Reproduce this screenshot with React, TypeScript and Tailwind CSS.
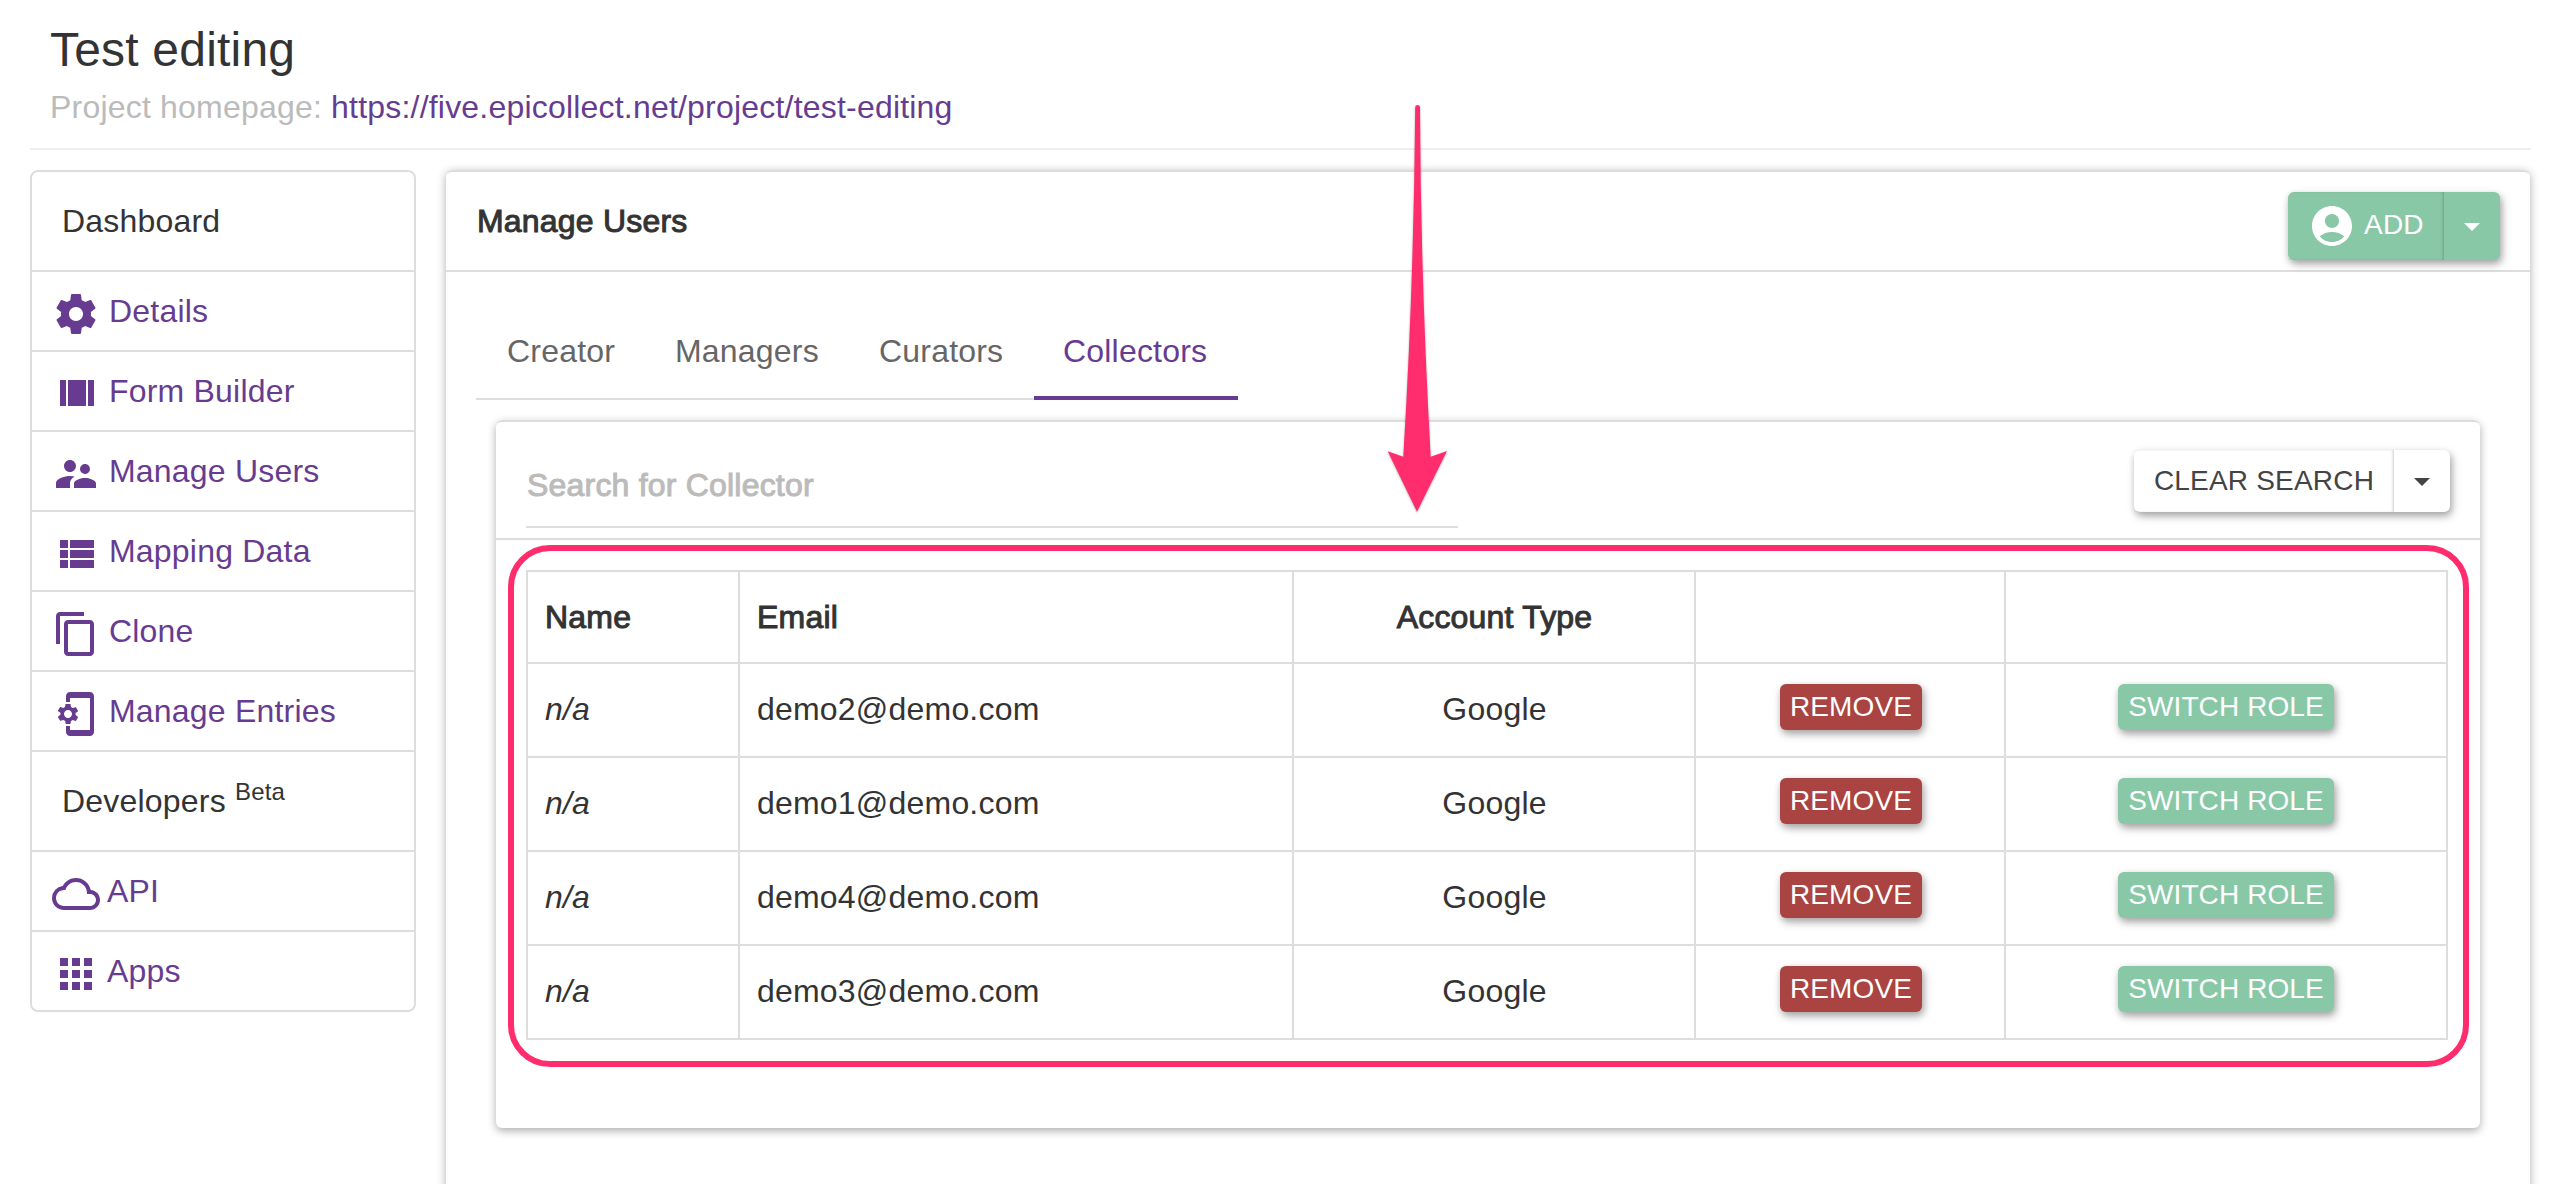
import type { ReactNode } from "react";
import { MdAccountCircle, MdApps, MdCloudQueue, MdContentCopy, MdSupervisorAccount } from "react-icons/md";

const raised = "shadow-[2px_4px_10px_rgba(0,0,0,0.26),1px_3px_6px_rgba(0,0,0,0.16)]";
const iconSize = "mt-[18px] size-12";

const paths = {
  settings:
    "M19.43 12.98c.04-.32.07-.64.07-.98s-.03-.66-.07-.98l2.11-1.65c.19-.15.24-.42.12-.64l-2-3.46c-.12-.22-.39-.3-.61-.22l-2.49 1c-.52-.4-1.08-.73-1.69-.98l-.38-2.65C14.46 2.18 14.25 2 14 2h-4c-.25 0-.46.18-.49.42l-.38 2.65c-.61.25-1.17.59-1.69.98l-2.49-1c-.23-.09-.49 0-.61.22l-2 3.46c-.13.22-.07.49.12.64l2.11 1.65c-.04.32-.07.65-.07.98s.03.66.07.98l-2.11 1.65c-.19.15-.24.42-.12.64l2 3.46c.12.22.39.3.61.22l2.49-1c.52.4 1.08.73 1.69.98l.38 2.65c.03.24.24.42.49.42h4c.25 0 .46-.18.49-.42l.38-2.65c.61-.25 1.17-.59 1.69-.98l2.49 1c.23.09.49 0 .61-.22l2-3.46c.12-.22.07-.49-.12-.64l-2.11-1.65zM12 15.5c-1.93 0-3.5-1.57-3.5-3.5s1.57-3.5 3.5-3.5 3.5 1.57 3.5 3.5-1.57 3.5-3.5 3.5z",
  columns: "M4 18h3V5H4v13zM18 5v13h3V5h-3zM8 18h9V5H8v13z",
  list: "M4 14h4v-4H4v4zm0 5h4v-4H4v4zM4 9h4V5H4v4zm5 5h12v-4H9v4zm0 5h12v-4H9v4zM9 5v4h12V5H9z",
  phoneSetup:
    "M11.8 12.5v-1l1.1-.8c.1-.1.1-.2.1-.3l-1-1.7c-.1-.1-.2-.2-.3-.1l-1.3.4c-.3-.2-.6-.4-.9-.5l-.2-1.3c0-.1-.1-.2-.3-.2H7c-.1 0-.2.1-.3.2l-.2 1.3c-.3.1-.6.3-.9.5l-1.3-.5c-.1 0-.2 0-.3.1l-1 1.7c-.1.1 0 .2.1.3l1.1.8v1l-1.1.8c-.1.2-.1.3-.1.4l1 1.7c.1.1.2.2.3.1l1.4-.4c.3.2.6.4.9.5l.2 1.3c-.1.1.1.2.2.2h2c.1 0 .2-.1.3-.2l.2-1.3c.3-.1.6-.3.9-.5l1.3.5c.1 0 .2 0 .3-.1l1-1.7c.1-.1 0-.2-.1-.3l-1.1-.9zM8 14c-1.1 0-2-.9-2-2s.9-2 2-2 2 .9 2 2-.9 2-2 2zM19 1H9c-1.1 0-2 .9-2 2v3h2V4h10v16H9v-2H7v3c0 1.1.9 2 2 2h10c1.1 0 2-.9 2-2V3c0-1.1-.9-2-2-2z",
};

function PathIcon({ d }: { d: string }) {
  return (
    <svg viewBox="0 0 24 24" className={iconSize} fill="currentColor">
      <path d={d} />
    </svg>
  );
}

function NavHeading({ children }: { children: ReactNode }) {
  return (
    <div className="flex h-[100px] items-center border-t-2 border-[#ddd] px-[30px] text-[#333] first:h-[98px] first:border-t-0">
      <span>{children}</span>
    </div>
  );
}

function NavItem({ icon, label, tight }: { icon: ReactNode; label: string; tight?: boolean }) {
  return (
    <a className="flex h-20 items-start border-t-2 border-[#ddd] pl-5 text-[#673c90]">
      {icon}
      <span className={`pt-5 leading-[38px] ${tight ? "ml-[7px]" : "ml-[9px]"}`}>{label}</span>
    </a>
  );
}

function Caret() {
  return (
    <svg viewBox="0 0 16 8" className="h-2 w-4" fill="currentColor">
      <path d="M0 0h16L8 8z" />
    </svg>
  );
}

const tabs = [
  { label: "Creator", className: "w-[168px] border-b-2 border-[#ddd] pb-0.5 pl-[31px] text-[#666]" },
  { label: "Managers", className: "w-[204px] border-b-2 border-[#ddd] pb-0.5 pl-[31px] text-[#666]" },
  { label: "Curators", className: "w-[186px] border-b-2 border-[#ddd] pb-0.5 pl-[31px] text-[#666]" },
  { label: "Collectors", className: "w-[204px] border-b-4 border-[#673c90] pl-[29px] text-[#673c90]" },
];

const emails = ["demo2@demo.com", "demo1@demo.com", "demo4@demo.com", "demo3@demo.com"];
const cols = "grid grid-cols-[212px_554px_402px_310px_442px]";
const cell = "border-r-2 border-b-2 border-[#ddd]";
const bold = "[-webkit-text-stroke:1px_currentColor]";
const rowButton = "h-[46px] rounded-md text-[28px] leading-[46px] tracking-[0.1px] text-white";

export default function App() {
  return (
    <div className="relative h-[1184px] w-[2556px] overflow-hidden bg-white font-['Liberation_Sans',Arial,sans-serif] text-[32px] leading-[44px] tracking-[0.2px] text-[#333]">
      <header className="ml-[30px] h-[150px] w-[2501px] border-b-2 border-[#eee] pl-5">
        <h1 className="pt-[23px] text-[48px] leading-[54px]">Test editing</h1>
        <p className="mt-2 text-[#bbb]">
          Project homepage: <a className="text-[#673c90]">https://five.epicollect.net/project/test-editing</a>
        </p>
      </header>

      <div className="mt-5 flex items-start">
        <nav className="ml-[30px] w-[386px] rounded-lg border-2 border-[#ddd]">
          <NavHeading>Dashboard</NavHeading>
          <NavItem icon={<PathIcon d={paths.settings} />} label="Details" />
          <NavItem icon={<PathIcon d={paths.columns} />} label="Form Builder" />
          <NavItem icon={<MdSupervisorAccount className={iconSize} />} label="Manage Users" />
          <NavItem icon={<PathIcon d={paths.list} />} label="Mapping Data" />
          <NavItem icon={<MdContentCopy className={iconSize} />} label="Clone" />
          <NavItem icon={<PathIcon d={paths.phoneSetup} />} label="Manage Entries" />
          <NavHeading>
            Developers <sup className="-top-3 align-baseline text-[24px] leading-none">Beta</sup>
          </NavHeading>
          <NavItem icon={<MdCloudQueue className={iconSize} />} label="API" tight />
          <NavItem icon={<MdApps className={iconSize} />} label="Apps" tight />
        </nav>

        <main className="ml-[30px] h-[1100px] w-[2084px] rounded-t-md border-t-2 border-[#ddd] shadow-[0_2px_10px_rgba(0,0,0,0.32)]">
          <div className="flex h-[100px] items-start justify-between border-b-2 border-[#ddd] pr-[30px] pl-[31px]">
            <h2 className={`pt-[27px] ${bold}`}>Manage Users</h2>
            <div className={`mt-5 flex h-[68px] rounded-md bg-[#88c8a6] text-[28px] text-white ${raised}`}>
              <button className="flex w-[156px] items-center pl-5 shadow-[inset_-2px_0_3px_-1px_rgba(0,0,0,0.2)]">
                <MdAccountCircle className="size-12" />
                <span className="ml-2 pb-[3px]">ADD</span>
              </button>
              <button className="flex w-14 items-center justify-center pt-0.5">
                <Caret />
              </button>
            </div>
          </div>

          <div className="flex pt-6 pl-[30px]">
            {tabs.map((t) => (
              <div key={t.label} className={`flex h-[104px] items-center pt-2.5 ${t.className}`}>
                {t.label}
              </div>
            ))}
          </div>

          <section className="mt-5 ml-[50px] h-[708px] w-[1984px] rounded-md border-t-2 border-[#ddd] shadow-[0_3px_9px_rgba(0,0,0,0.32)]">
            <div className="flex h-[118px] items-start justify-between border-b-2 border-[#ddd] pr-[30px] pl-[30px]">
              <div className={`h-[106px] w-[932px] border-b-2 border-[#ddd] pt-[41px] pl-px text-[#bbb] ${bold}`}>
                Search for Collector
              </div>
              <div className={`mt-7 flex h-[62px] rounded-md bg-white text-[28px] text-[#444] ${raised}`}>
                <button className="w-[260px] pb-px shadow-[inset_-2px_0_3px_-1px_rgba(0,0,0,0.2)]">
                  CLEAR SEARCH
                </button>
                <button className="flex w-14 items-center justify-center pt-0.5">
                  <Caret />
                </button>
              </div>
            </div>

            <div className="mt-[30px] ml-[30px] w-[1922px] border-t-2 border-l-2 border-[#ddd]">
              <div className={`${cols} ${bold} h-[92px] leading-[90px]`}>
                <div className={`${cell} pl-[17px]`}>Name</div>
                <div className={`${cell} pl-[17px]`}>Email</div>
                <div className={`${cell} pl-px text-center`}>Account Type</div>
                <div className={cell} />
                <div className={cell} />
              </div>
              {emails.map((email) => (
                <div key={email} className={`${cols} h-[94px] leading-[90px]`}>
                  <div className={`${cell} pl-[17px] italic`}>n/a</div>
                  <div className={`${cell} pl-[17px]`}>{email}</div>
                  <div className={`${cell} pl-px text-center`}>Google</div>
                  <div className={`${cell} flex items-start justify-center pt-5 pl-0.5`}>
                    <button className={`w-[142px] bg-[#a94442] ${rowButton} ${raised}`}>REMOVE</button>
                  </div>
                  <div className={`${cell} flex items-start justify-center pt-5`}>
                    <button className={`w-[216px] bg-[#88c8a6] ${rowButton} ${raised}`}>SWITCH ROLE</button>
                  </div>
                </div>
              ))}
            </div>
          </section>
        </main>
      </div>

      {/* Annotations laid over the page */}
      <div className="absolute top-[545px] left-[508px] h-[522px] w-[1961px] rounded-[42px] border-6 border-[#ff2d6d]" />
      <svg
        className="absolute top-[100px] left-[1380px] h-[420px] w-[76px] drop-shadow-[0_1px_1px_rgba(0,0,0,0.3)]"
        viewBox="1380 100 76 420"
        fill="#ff2d6d"
      >
        <path d="M1415.2 107Q1415.5 105 1417.6 105Q1419.7 105 1420 107Q1420.7 280 1430.7 456.7L1447 451L1417 511.7L1387.7 451.3L1403.3 456.7Q1414 280 1415.2 107Z" />
      </svg>
    </div>
  );
}
